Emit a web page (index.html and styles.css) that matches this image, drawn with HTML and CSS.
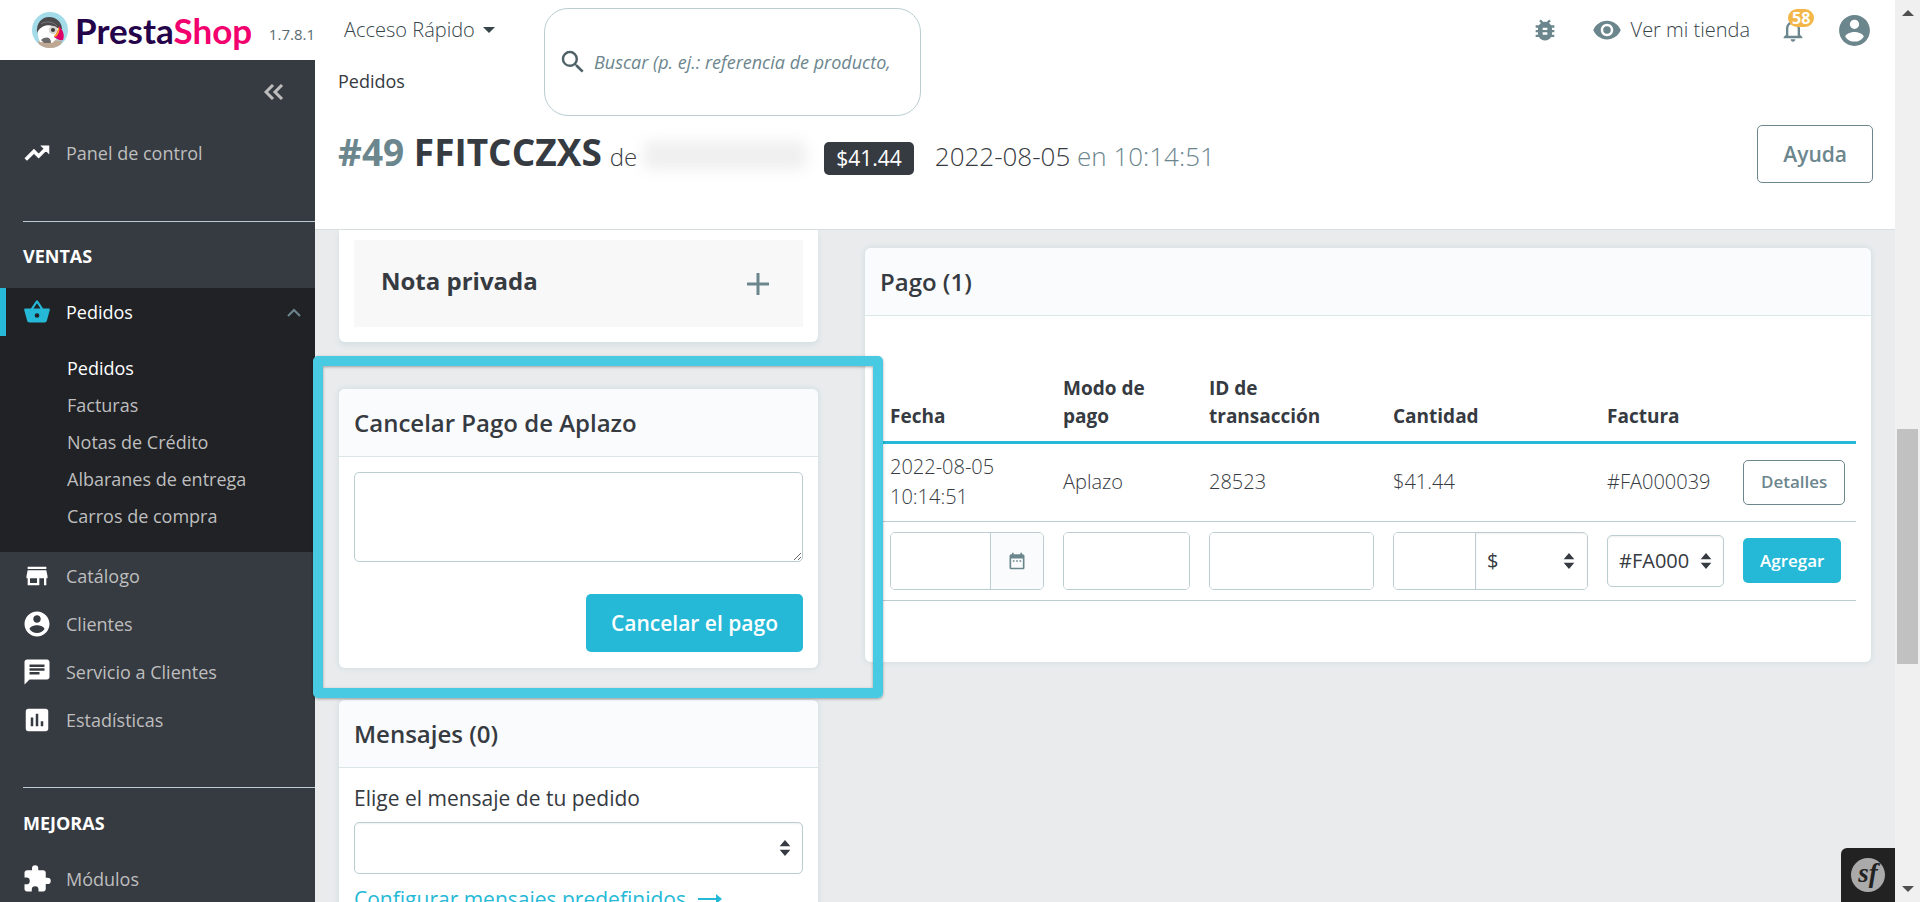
FILE: index.html
```html
<!DOCTYPE html>
<html lang="es">
<head>
<meta charset="utf-8">
<title>Pedidos • PrestaShop</title>
<link rel="stylesheet" href="styles.css">
</head>
<body>
<div class="app">
  <header class="topbar">
    <div class="brand">
      <svg class="brand-mark" viewBox="0 0 36 36" aria-hidden="true">
        <defs><clipPath id="disc"><circle cx="18" cy="18" r="18"/></clipPath></defs>
        <g clip-path="url(#disc)">
          <rect width="36" height="36" fill="#a4dbe8"/>
          <path d="M6 29Q18 27 30 29L28 36H8Z" fill="#bfa893"/>
          <path d="M8 30C5 24 5 16 9 12C13 8 22 8 26 14C28 20 26 27 20 31Z" fill="#fff"/>
          <path d="M5 21C4 11 10 5 17 5C25 5 30 11 30 17C27 18 25 15 21 14C15 12 8 14 5 21Z" fill="#4a4a4d"/>
          <path d="M9 12C13 9 21 9 25 14" fill="none" stroke="#7b7a7c"/>
          <circle cx="21" cy="18" r="4" fill="#d6d2cc"/>
          <circle cx="21" cy="18" r="2" fill="#3b3b3f"/>
          <path d="M9 28C14 24 19 25 19 31H12Z" fill="#6d6a6b"/>
          <path d="M27 14C31 18 33 23 31 28C28 29 25 27 22 25C24 22 26 19 27 14Z" fill="#df0067"/>
          <path d="M27 15C28 18 27 22 24 25L22 24C25 21 26 19 26 16Z" fill="#f5a623"/>
        </g>
      </svg>
      <span class="brand-name">Presta<span class="brand-shop">Shop</span></span>
      <span class="version">1.7.8.1</span>
    </div>
    <button class="quick" type="button">Acceso Rápido
      <svg class="caret" viewBox="0 0 12 6" aria-hidden="true"><path d="M0 0H12L6 6Z"/></svg>
    </button>
    <form class="search">
      <svg class="icon" viewBox="0 0 24 24" aria-hidden="true"><path d="M15.5 14h-.79l-.28-.27A6.47 6.47 0 0 0 16 9.5 6.5 6.5 0 1 0 9.5 16c1.61 0 3.09-.59 4.23-1.57l.27.28v.79l5 4.99L20.49 19l-4.99-5zm-6 0C7.01 14 5 11.99 5 9.5S7.01 5 9.5 5 14 7.01 14 9.5 11.99 14 9.5 14z"/></svg>
      <input type="text" aria-label="Buscar" placeholder="Buscar (p. ej.: referencia de producto, nombre de cliente)">
    </form>
    <nav class="tools" aria-label="Herramientas">
      <a class="tool" href="#" aria-label="Modo de depuración"><svg class="icon-m" viewBox="0 0 24 24"><path d="M20 8h-2.81a5.985 5.985 0 0 0-1.82-1.96L17 4.41 15.59 3l-2.17 2.17a6.002 6.002 0 0 0-2.83 0L8.41 3 7 4.41l1.62 1.63C7.88 6.55 7.26 7.22 6.81 8H4v2h2.09c-.05.33-.09.66-.09 1v1H4v2h2v1c0 .34.04.67.09 1H4v2h2.81c1.04 1.79 2.97 3 5.19 3s4.15-1.21 5.19-3H20v-2h-2.09c.05-.33.09-.66.09-1v-1h2v-2h-2v-1c0-.34-.04-.67-.09-1H20V8zm-6 8h-4v-2h4v2zm0-4h-4v-2h4v2z"/></svg></a>
      <a class="tool shop-link" href="#"><svg class="icon-l" viewBox="0 0 24 24" aria-hidden="true"><path d="M12 4.5C7 4.5 2.73 7.61 1 12c1.73 4.39 6 7.5 11 7.5s9.27-3.11 11-7.5c-1.73-4.39-6-7.5-11-7.5zM12 17c-2.76 0-5-2.24-5-5s2.24-5 5-5 5 2.24 5 5-2.24 5-5 5zm0-8a3 3 0 1 0 0 6 3 3 0 0 0 0-6z"/></svg><span>Ver mi tienda</span></a>
      <button class="tool bell" type="button" aria-label="Notificaciones"><svg class="icon-m" viewBox="0 0 24 24"><path d="M12 22c1.1 0 2-.9 2-2h-4c0 1.1.89 2 2 2zm6-6v-5c0-3.07-1.64-5.64-4.5-6.32V4a1.5 1.5 0 0 0-3 0v.68C7.63 5.36 6 7.92 6 11v5l-2 2v1h16v-1l-2-2zm-2 1H8v-6c0-2.48 1.51-4.5 4-4.5s4 2.02 4 4.5v6z"/></svg><span class="count">58</span></button>
      <button class="tool" type="button" aria-label="Cuenta"><svg class="icon-xl" viewBox="0 0 24 24"><path d="M12 2C6.48 2 2 6.48 2 12s4.48 10 10 10 10-4.48 10-10S17.52 2 12 2zm0 3c1.66 0 3 1.34 3 3s-1.34 3-3 3-3-1.34-3-3 1.34-3 3-3zm0 14.2a7.2 7.2 0 0 1-6-3.22c.03-1.99 4-3.08 6-3.08 1.99 0 5.97 1.09 6 3.08a7.2 7.2 0 0 1-6 3.22z"/></svg></button>
    </nav>
  </header>

  <aside class="sidebar">
    <div class="collapse"><button type="button" aria-label="Contraer menú"><svg class="chev2" viewBox="0 0 20 16"><path d="M9 1L2 8L9 15M18 1L11 8L18 15"/></svg></button></div>
    <nav class="menu" aria-label="Menú principal">
      <a class="item" href="#"><svg class="icon-m" viewBox="0 0 24 24"><path d="M16 6l2.29 2.29-4.88 4.88-4-4L2 16.59 3.41 18l6-6 4 4 6.3-6.29L22 12V6z" stroke="currentColor"/></svg>Panel de control</a>
      <h2 class="section first">VENTAS</h2>
      <div class="open">
        <a class="item current" href="#"><svg class="icon-m" viewBox="0 0 24 24"><path d="M17.21 9l-4.38-6.56a1 1 0 0 0-1.66 0L6.79 9H2c-.55 0-1 .45-1 1 0 .09.01.18.04.27l2.54 9.27C3.81 20.38 4.58 21 5.5 21h13c.92 0 1.69-.62 1.93-1.46l2.54-9.27L23 10c0-.55-.45-1-1-1h-4.79zM9 9l3-4.4L15 9H9zm3 8a2 2 0 1 1 0-4 2 2 0 0 1 0 4z"/></svg><span>Pedidos</span><svg class="chev" viewBox="0 0 14 9"><path d="M1 8L7 2L13 8"/></svg></a>
        <ul class="sub">
          <li><a class="on" href="#">Pedidos</a></li>
          <li><a href="#">Facturas</a></li>
          <li><a href="#">Notas de Crédito</a></li>
          <li><a href="#">Albaranes de entrega</a></li>
          <li><a href="#">Carros de compra</a></li>
        </ul>
      </div>
      <a class="item" href="#"><svg class="icon-m" viewBox="0 0 24 24"><path d="M20 4H4v2h16V4zm1 10v-2l-1-5H4l-1 5v2h1v6h10v-6h4v6h2v-6h1zm-9 4H6v-4h6v4z"/></svg>Catálogo</a>
      <a class="item" href="#"><svg class="icon-l" viewBox="0 0 24 24"><path d="M12 2C6.48 2 2 6.48 2 12s4.48 10 10 10 10-4.48 10-10S17.52 2 12 2zm0 3c1.66 0 3 1.34 3 3s-1.34 3-3 3-3-1.34-3-3 1.34-3 3-3zm0 14.2a7.2 7.2 0 0 1-6-3.22c.03-1.99 4-3.08 6-3.08 1.99 0 5.97 1.09 6 3.08a7.2 7.2 0 0 1-6 3.22z"/></svg>Clientes</a>
      <a class="item" href="#"><svg class="icon-l" viewBox="0 0 24 24"><path d="M20 2H4c-1.1 0-1.99.9-1.99 2L2 22l4-4h14c1.1 0 2-.9 2-2V4c0-1.1-.9-2-2-2zM6 9h12v2H6V9zm8 5H6v-2h8v2zm4-6H6V6h12v2z"/></svg>Servicio a Clientes</a>
      <a class="item" href="#"><svg class="icon-l" viewBox="0 0 24 24"><path d="M19 3H5c-1.1 0-2 .9-2 2v14c0 1.1.9 2 2 2h14c1.1 0 2-.9 2-2V5c0-1.1-.9-2-2-2zM9 17H7v-7h2v7zm4 0h-2V7h2v10zm4 0h-2v-4h2v4z"/></svg>Estadísticas</a>
      <h2 class="section second">MEJORAS</h2>
      <a class="item" href="#"><svg class="icon-l" viewBox="0 0 24 24"><path d="M20.5 11H19V7c0-1.1-.9-2-2-2h-4V3.5a2.5 2.5 0 0 0-5 0V5H4c-1.1 0-1.99.9-1.99 2v3.8H3.5a2.7 2.7 0 0 1 0 5.4H2V20c0 1.1.9 2 2 2h3.8v-1.5a2.7 2.7 0 0 1 5.4 0V22H17c1.1 0 2-.9 2-2v-4h1.5a2.5 2.5 0 0 0 0-5z"/></svg>Módulos</a>
    </nav>
  </aside>

  <main class="main">
    <div class="pagehead">
      <nav class="crumb" aria-label="Ruta"><a href="#">Pedidos</a></nav>
      <div class="titlebar">
        <h1 class="title"><strong><span class="num">#49</span> FFITCCZXS</strong> <span class="of">de</span><span class="hidden-name"></span><span class="amount">$41.44</span><span class="date">2022-08-05 <span class="time">en 10:14:51</span></span></h1>
        <button class="btn outline large" type="button">Ayuda</button>
      </div>
    </div>

    <div class="content">
      <div class="left">
        <section class="card cut">
          <div class="note"><h3>Nota privada</h3><button type="button" aria-label="Añadir nota"><svg viewBox="0 0 22 22"><path d="M11 0V22M0 11H22"/></svg></button></div>
        </section>
        <section class="card cancel">
          <h3 class="card-head">Cancelar Pago de Aplazo</h3>
          <div class="card-body">
            <textarea aria-label="Motivo de la cancelación"></textarea>
            <button class="btn primary large" type="button">Cancelar el pago</button>
          </div>
          <div class="frame"></div>
        </section>
        <section class="card messages">
          <h3 class="card-head">Mensajes (0)</h3>
          <div class="card-body">
            <label for="msg">Elige el mensaje de tu pedido</label>
            <div class="pick"><select id="msg"><option></option></select><svg class="sort" viewBox="0 0 12 18"><path d="M0 7L6 0L12 7ZM0 11H12L6 18Z"/></svg></div>
            <a class="more" href="#">Configurar mensajes predefinidos <svg viewBox="0 0 24 10"><path d="M0 4H18V0L24 5L18 10V6H0Z"/></svg></a>
          </div>
        </section>
      </div>

      <section class="card pay">
        <h3 class="card-head">Pago (1)</h3>
        <div class="pay-body">
          <table>
            <colgroup><col class="c1"><col class="c2"><col class="c3"><col class="c4"><col class="c5"><col class="c6"></colgroup>
            <thead><tr><th>Fecha</th><th>Modo de pago</th><th>ID de transacción</th><th>Cantidad</th><th>Factura</th><th></th></tr></thead>
            <tbody>
              <tr><td>2022-08-05 10:14:51</td><td>Aplazo</td><td>28523</td><td>$41.44</td><td>#FA000039</td><td><button class="btn outline small" type="button">Detalles</button></td></tr>
              <tr>
                <td><div class="group"><input type="text" aria-label="Fecha"><span class="addon"><svg viewBox="0 0 24 24"><path d="M9 11H7v2h2v-2zm4 0h-2v2h2v-2zm4 0h-2v2h2v-2zm2-7h-1V2h-2v2H8V2H6v2H5c-1.11 0-1.99.9-1.99 2L3 20a2 2 0 0 0 2 2h14c1.1 0 2-.9 2-2V6c0-1.1-.9-2-2-2zm0 16H5V9h14v11z"/></svg></span></div></td>
                <td><div class="group"><input type="text" aria-label="Modo de pago"></div></td>
                <td><div class="group"><input type="text" aria-label="ID de transacción"></div></td>
                <td><div class="group"><input class="qty" type="text" aria-label="Cantidad"><div class="pick"><select aria-label="Moneda"><option>$</option></select><svg class="sort" viewBox="0 0 12 18"><path d="M0 7L6 0L12 7ZM0 11H12L6 18Z"/></svg></div></div></td>
                <td><div class="pick bill"><select aria-label="Factura"><option>#FA000039</option></select><svg class="sort" viewBox="0 0 12 18"><path d="M0 7L6 0L12 7ZM0 11H12L6 18Z"/></svg></div></td>
                <td><button class="btn primary small" type="button">Agregar</button></td>
              </tr>
            </tbody>
          </table>
        </div>
      </section>
    </div>
  </main>

  <div class="scrollbar" aria-hidden="true">
    <svg class="arrow" viewBox="0 0 12 6"><path d="M0 6L6 0L12 6Z"/></svg>
    <div class="track"><div class="thumb"></div></div>
    <svg class="arrow" viewBox="0 0 12 6"><path d="M0 0H12L6 6Z"/></svg>
  </div>
  <button class="debug" type="button" aria-label="Symfony"><span>sf</span></button>
</div>
</body>
</html>
```
FILE: styles.css
```css
* { box-sizing: border-box; }
body { margin: 0; font: 400 18px/28px "Open Sans", "Noto Sans", sans-serif; color: #363a41; }
h1, h2, h3, ul { margin: 0; padding: 0; font: inherit; }
a { color: inherit; text-decoration: none; }
button { border: 0; padding: 0; background: none; font: inherit; color: inherit; }
input, select, textarea { font: inherit; color: inherit; }
svg { display: block; flex: none; fill: currentColor; }

.app {
  position: relative;
  height: 100vh;
  overflow: hidden;
  display: grid;
  grid-template: 60px minmax(0, 1fr) / 315px minmax(0, 1fr) 25px;
  background: #e9ebec;
}
.icon, .icon-l { width: 30px; height: 30px; }
.icon-m { width: 28px; height: 28px; }
.icon-xl { width: 37px; height: 37px; }

/* Top bar */
.topbar { grid-area: 1 / 1 / 2 / 3; display: flex; align-items: center; background: #fff; position: relative; z-index: 2; }
.brand { width: 315px; display: flex; align-items: center; padding-left: 32px; }
.brand-mark { width: 36px; height: 36px; }
.brand-name { margin-left: 7px; font: 700 35px/40px Lato, sans-serif; color: #25034a; }
.brand-shop { color: #f1006e; }
.version { margin-left: auto; padding-top: 8px; font-size: 15px; line-height: 20px; color: #576c72; }
.quick { display: flex; align-items: center; gap: 8px; width: 229px; padding-left: 29px; font-size: 20px; font-weight: 300; color: #36454a; white-space: nowrap; }
.caret { width: 12px; height: 6px; }
.search { display: flex; align-items: center; gap: 6px; align-self: flex-start; width: 377px; height: 108px; margin-top: 8px; padding: 0 31px 1px 13px; border: 1px solid #bbcdd2; border-radius: 24px; background: #fff; color: #4e6167; }
.search input { flex: 1; min-width: 0; padding: 0; border: 0; outline: 0; background: none; font-size: 18px; }
.search input::placeholder { color: #6c868e; font-style: italic; opacity: 1; }
.tools { margin-left: auto; padding-right: 22px; display: flex; align-items: center; color: #6c868e; }
.tool { display: flex; align-items: center; }
.shop-link { margin: 0 29px 0 33px; gap: 9px; font-size: 20px; font-weight: 300; white-space: nowrap; }
.shop-link span { color: #36454a; }
.bell { position: relative; margin-right: 29px; }
.count { position: absolute; left: 9px; top: -7px; padding: 0 4px; border-radius: 9px; background: #f3b749; color: #fff; font-weight: 700; font-size: 16px; line-height: 18px; }

/* Side menu */
.sidebar { grid-area: 2 / 1; background: #363a41; color: #bebebe; }
.collapse { display: flex; justify-content: flex-end; padding: 24px 31px 0 0; }
.chev2 { width: 20px; height: 16px; fill: none; stroke: #bebebe; stroke-width: 3; }
.menu { padding-top: 29px; }
.item { display: flex; align-items: center; height: 48px; padding-left: 22px; }
.item > .icon-m, .item > .icon-l { color: #fff; margin-right: 14px; }
.item > .icon-m { margin-left: 1px; margin-right: 15px; }
.section { margin-left: 23px; border-top: 1px solid #bbcdd2; color: #fff; font-weight: 700; }
.section.first { margin-top: 44px; height: 67px; padding-top: 20px; }
.section.second { margin-top: 43px; height: 68px; padding-top: 21px; }
.open { background: #202226; height: 264px; }
.item.current { color: #fff; border-left: 6px solid #25b9d7; padding-left: 16px; padding-right: 14px; }
.item.current .icon-m { color: #25b9d7; }
.chev { width: 14px; height: 9px; margin-left: auto; fill: none; stroke: #6c868e; stroke-width: 2; }
.sub { list-style: none; padding: 14px 0 0 67px; }
.sub li { height: 37px; line-height: 37px; }
.sub .on { color: #fff; }

/* Page heading */
.main { grid-area: 2 / 2; display: flex; flex-direction: column; min-width: 0; }
.pagehead { flex: none; height: 170px; padding: 7px 22px 0 23px; background: #fff; border-bottom: 1px solid #d8dee0; }
.titlebar { display: flex; justify-content: space-between; align-items: flex-start; margin-top: 30px; }
.title { display: flex; align-items: baseline; font-weight: 300; font-size: 24px; line-height: 54px; white-space: nowrap; }
.title strong { font-weight: 700; font-size: 37px; }
.num { color: #6c868e; }
.of { margin-left: 8px; }
.hidden-name { align-self: center; width: 162px; height: 28px; margin-left: 7px; background: #efefef; filter: blur(7px); }
.amount { margin: 0 21px 0 18px; padding: 0 12px; border-radius: 5px; background: #363a41; color: #fff; font-size: 21px; font-weight: 400; line-height: 33px; }
.date { font-size: 26px; }
.time { color: #6c868e; }

/* Buttons */
.btn { border-radius: 5px; font-weight: 600; white-space: nowrap; }
.outline { border: 1px solid #6c868e; background: #fff; color: #6c868e; }
.primary { background: #25b9d7; color: #fff; }
.large { height: 58px; padding: 0 25px; font-size: 21px; }
.small { height: 45px; padding: 0 17px; font-size: 17px; }

/* Cards */
.content { display: grid; grid-template-columns: minmax(0, 479fr) minmax(0, 1006fr); column-gap: 47px; align-items: start; padding: 0 24px; }
.card { background: #fff; border-radius: 6px; box-shadow: 0 0 5px 1px #d3dfe2; }
.card-head { height: 68px; padding: 0 15px; border-bottom: 1px solid #dbe6e9; border-radius: 6px 6px 0 0; background: #fafbfc; font-size: 24px; font-weight: 600; line-height: 67px; }
.cut { border-radius: 0 0 6px 6px; padding: 10px 15px 15px; box-shadow: 0 3px 5px #d3dfe2; }
.note { display: flex; align-items: center; justify-content: space-between; height: 87px; padding: 0 34px 0 27px; background: #f8f8f8; }
.note h3 { padding-bottom: 6px; font-size: 24px; font-weight: 700; }
.note svg { width: 22px; height: 22px; stroke: #6c868e; stroke-width: 3; }
.cancel { position: relative; margin-top: 47px; }
.cancel .card-body { display: flex; flex-direction: column; align-items: flex-end; gap: 32px; padding: 15px 15px 16px; }
textarea { width: 100%; height: 90px; border: 1px solid #bbcdd2; border-radius: 5px; resize: vertical; }
.frame { position: absolute; inset: -33px -65px -30px -26px; z-index: 3; border: 10px solid #48cae2; border-radius: 5px; box-shadow: 0 1px 3px #0005, inset 0 1px 3px #0005; pointer-events: none; }
.messages { margin-top: 32px; height: 300px; }
.messages .card-body { padding: 16px 15px; font-size: 21px; }
.messages label { display: block; margin-bottom: 10px; }
.messages .pick { height: 52px; }
.more { display: flex; align-items: center; gap: 12px; margin-top: 11px; color: #25b9d7; white-space: nowrap; }
.more svg { width: 24px; height: 10px; }

/* Selects with a sort mark drawn over their right end */
.pick { display: grid; }
.pick select, .pick .sort { grid-area: 1 / 1; }
.pick select { appearance: none; min-width: 0; width: 100%; padding: 0 40px 0 11px; border: 1px solid #bbcdd2; border-radius: 5px; background: #fff; box-shadow: inset 0 1px 2px #0001; font-size: 20px; font-weight: 400; }
.sort { width: 12px; height: 16px; justify-self: end; align-self: center; margin-right: 12px; pointer-events: none; }

/* Payments */
.pay { margin-top: 18px; }
.pay-body { padding: 56px 15px 61px; }
table { width: 100%; table-layout: fixed; border-collapse: collapse; }
.c1 { width: 173px; } .c2 { width: 146px; } .c3 { width: 184px; } .c4 { width: 214px; } .c5 { width: 136px; } .c6 { width: 123px; }
th { height: 70px; padding: 0 18px 11px 10px; border-bottom: 3px solid #25b9d7; text-align: left; vertical-align: bottom; font-size: 19px; font-weight: 700; }
td { height: 79px; padding: 0 9px 0 10px; border-bottom: 1px solid #bbcdd2; font-size: 20px; font-weight: 300; line-height: 30px; }
.group { display: flex; height: 58px; border: 1px solid #bbcdd2; border-radius: 5px; overflow: hidden; }
.group input { flex: 1; min-width: 0; border: 0; padding: 0 12px; background: #fff; }
.group .qty { flex: 0 0 81px; }
.addon { display: flex; align-items: center; justify-content: center; width: 53px; border-left: 1px solid #bbcdd2; background: #fafbfc; color: #6c868e; }
.addon svg { width: 20px; height: 20px; }
.group .pick { flex: 1; }
.group select { border-width: 0 0 0 1px; border-radius: 0; }
.bill { height: 52px; }
.bill select { padding-right: 34px; }

/* Scroll bar and debug toggle */
.scrollbar { grid-area: 1 / 3 / 3 / 4; display: flex; flex-direction: column; align-items: center; padding: 10px 0; background: #f0f0f0; color: #505050; }
.arrow { width: 12px; height: 6px; }
.track { flex: 1; align-self: stretch; padding: 0 2px; }
.thumb { height: 27%; margin-top: 413px; background: #c1c1c1; }
.debug { position: absolute; right: 25px; bottom: 0; z-index: 4; width: 54px; height: 54px; display: grid; place-items: center; border-radius: 6px 0 0 0; background: #222; }
.debug span { width: 34px; height: 34px; border-radius: 50%; background: #aaa; color: #222; font: italic 700 27px/30px "Liberation Serif", serif; text-align: center; }
```
